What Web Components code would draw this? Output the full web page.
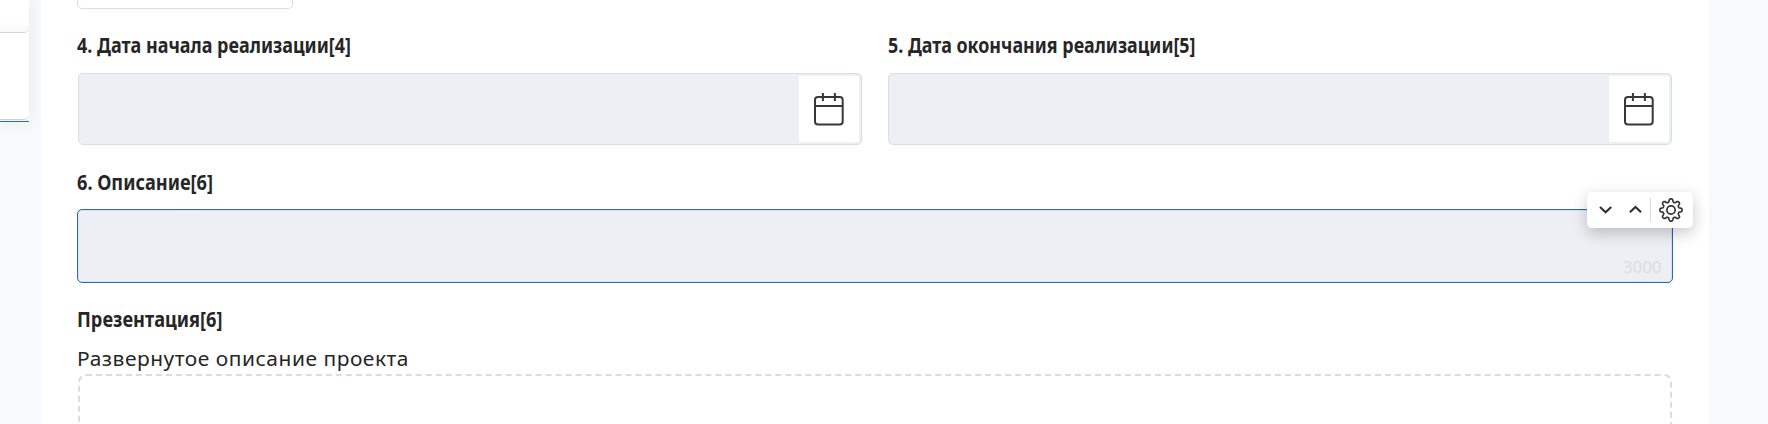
<!DOCTYPE html>
<html lang="ru"><head><meta charset="utf-8"><title>Проект</title>
<style>html,body{margin:0;height:424px;overflow:hidden;background:#f7f9fb;font-family:"Noto Sans",sans-serif;color:#262626}</style></head>
<body><project-page></project-page>
<script>
const define=(name,html,setup)=>customElements.define(name,class extends HTMLElement{
  connectedCallback(){if(this.shadowRoot)return;const t=document.createElement('template');t.innerHTML=html;
    this.attachShadow({mode:'open'}).append(t.content.cloneNode(true));if(setup)setup(this)}
});
/* Single-line text scaled horizontally to the width attribute. */
define('fit-text',`<style>:host{display:block;box-sizing:border-box;height:24px;padding-top:1px;line-height:24px;font-size:20px;white-space:nowrap}
:host([bold]){font-weight:700;font-size:20.500px}span{display:inline-block;transform-origin:0 0}</style><span><slot></slot></span>`,el=>{
  const s=el.shadowRoot.querySelector('span');
  s.style.letterSpacing=el.getAttribute('spacing')||'0';
  s.style.transform=`scaleX(${el.getAttribute('width')/s.getBoundingClientRect().width})`;
});
define('date-field',`<style>:host{display:flex;box-sizing:border-box;height:72px;border:1px solid #d9dde5;border-radius:5px;background:#edeff4;padding:2px;justify-content:flex-end}
div{width:60px;background:#fff;display:flex;align-items:center;justify-content:center}svg{display:block}</style>
<div><svg width="32" height="34" viewBox="0 0 32 34" fill="none" stroke="#383838" stroke-width="2"><rect x="2" y="4.900" width="27.700" height="27.500" rx="3"/><path d="M2 14H29.700M9.900 .9V8.900M21.900 .9V8.900"/></svg></div>`);
define('field-tools',`<style>:host{display:flex;box-sizing:border-box;width:106px;height:36px;border-radius:5px;background:#fff;box-shadow:0 5px 15px rgba(0,0,0,.22)}svg{display:block}</style>
<svg width="106" height="36" fill="none" stroke="#333" stroke-width="2.200"><path d="M13 15l5.600 5.200L24.200 15M42.900 20.200l5.600-5.200 5.600 5.200"/><path d="M63.500 6v24" stroke="#d9dde5" stroke-width="1"/><circle cx="84" cy="18" r="4.100" stroke-width="1.700"/><path id="gear" stroke-width="1.650" stroke-linejoin="round"/></svg>`,el=>{
  const p=[];for(let i=0;i<160;i++){const a=i*Math.PI/80,r=9.6+1.5*Math.tanh(1.8*Math.cos(8*a))/Math.tanh(1.8);p.push((84+r*Math.sin(a)).toFixed(2)+' '+(18-r*Math.cos(a)).toFixed(2))}
  el.shadowRoot.getElementById('gear').setAttribute('d','M'+p.join('L')+'Z');
});
define('text-area',`<style>:host{display:flex;position:relative;box-sizing:border-box;height:74px;border:1px solid #2969b5;border-radius:5px;background:#edeff4;box-shadow:inset 0 0 0 1px #dadfe8;align-items:flex-end;justify-content:flex-end;padding:0 11px 4px}
fit-text{width:38px;font-size:16.500px;color:#dadce2}field-tools{position:absolute;top:-18px;right:-21px}</style><fit-text width="38.5">3000</fit-text><field-tools></field-tools>`);
define('drop-zone',`<style>:host{display:block;box-sizing:border-box;height:120px;border:2px dashed #d9dce2;border-radius:8px}</style>`);
define('side-panel',`<style>:host{display:block;width:29px;height:122px;box-shadow:0 0 18px rgba(0,0,0,.07);background:#fff}
div{box-sizing:border-box;border-bottom:1px solid #d2d6dd}
.a{height:33px;border-radius:0 0 5px 0;background:linear-gradient(#fff 20px,#f9f9f9)}.b{height:87px;border-radius:0 0 5px 0;border-bottom-color:#cbd3dc}.c{height:2px;border-bottom:1px solid #2969b5;background:#f5f6f7}</style><div class="a"></div><div class="b"></div><div class="c"></div>`);
define('project-form',`<style>:host{display:block;box-sizing:border-box;width:1668px;height:424px;background:#fff;padding:0 36px}
.prev{box-sizing:border-box;width:216px;height:9px;border:1px solid #d9dde5;border-top:0;border-radius:0 0 5px 5px}
.dates{display:grid;grid-template-columns:784px 784px;gap:26px;margin:23px 0 24px 1px}date-field{margin-top:17px}.first{margin-left:-1px}
text-area{margin:16px 0 23px}.desc{margin-top:16px}drop-zone{margin:4px 1px 0}</style>
<div class="prev"></div><div class="dates"><div><fit-text class="first" bold width="274">4. Дата начала реализации[4]</fit-text><date-field></date-field></div>
<div><fit-text bold width="307.500">5. Дата окончания реализации[5]</fit-text><date-field></date-field></div></div>
<fit-text bold width="136">6. Описание[6]</fit-text><text-area></text-area>
<fit-text bold width="145.500">Презентация[6]</fit-text><fit-text class="desc" width="332" spacing=".5px">Развернутое описание проекта</fit-text><drop-zone></drop-zone>`);
define('project-page',`<style>:host{display:flex;gap:12px;height:424px;overflow:hidden}project-form{position:relative}</style><side-panel></side-panel><project-form></project-form>`);
</script></body></html>
